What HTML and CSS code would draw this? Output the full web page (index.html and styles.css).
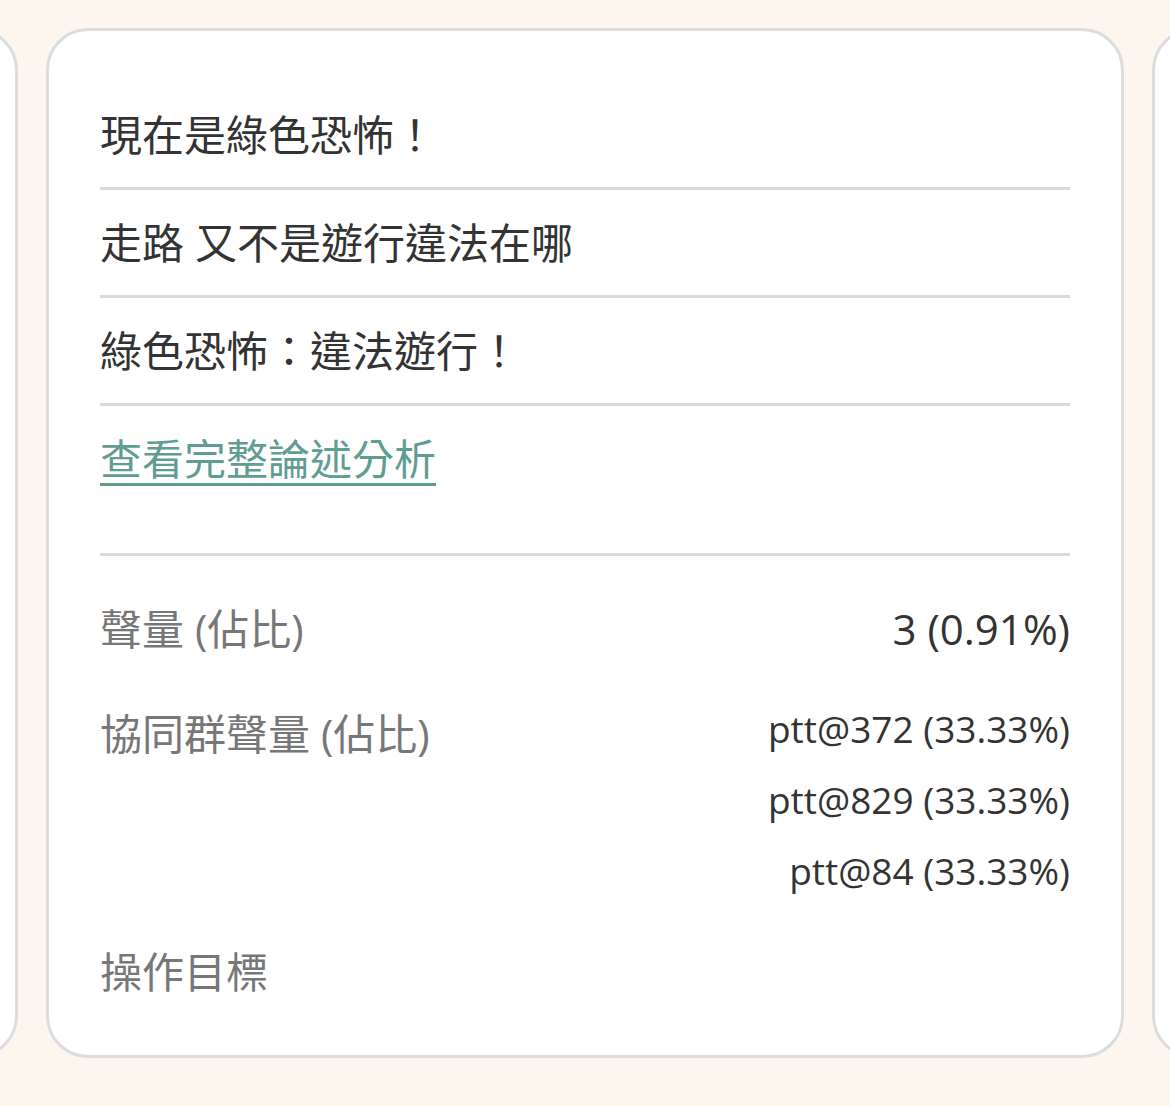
FILE: index.html
```html
<!DOCTYPE html>
<html lang="zh-Hant">
<head>
<meta charset="utf-8">
<title>論述卡片</title>
<link rel="stylesheet" href="styles.css">
</head>
<body>
<div class="track">
  <section class="card card-side" aria-hidden="true"></section>
  <section class="card">
    <ul class="claims">
      <li class="claim">現在是綠色恐怖！</li>
      <li class="claim">走路 又不是遊行違法在哪</li>
      <li class="claim">綠色恐怖：違法遊行！</li>
    </ul>
    <a class="more" href="#">查看完整論述分析</a>
    <dl class="stats">
      <div class="stat">
        <dt class="label">聲量 (佔比)</dt>
        <dd class="value">3 (0.91%)</dd>
      </div>
      <div class="stat">
        <dt class="label">協同群聲量 (佔比)</dt>
        <dd class="value">
          <span class="group">ptt@372 (33.33%)</span>
          <span class="group">ptt@829 (33.33%)</span>
          <span class="group">ptt@84 (33.33%)</span>
        </dd>
      </div>
      <div class="stat">
        <dt class="label">操作目標</dt>
        <dd class="value"></dd>
      </div>
    </dl>
  </section>
  <section class="card card-side" aria-hidden="true"></section>
</div>
</body>
</html>
```

FILE: styles.css
```css
html, body {
  margin: 0;
  padding: 0;
}
body {
  background: #fdf6ef;
  font-family: "Open Sans", "Noto Sans CJK TC", sans-serif;
  color: #333333;
  overflow: hidden;
}
.track {
  display: flex;
  justify-content: center;
  gap: 28px;
  padding-top: 28px;
  overflow: hidden;
}
.card {
  flex: 0 0 1078px;
  box-sizing: border-box;
  height: 1030px;
  background: #ffffff;
  border: 3px solid #dcdcdc;
  border-radius: 42px;
  padding: 51px 51px 0;
}
.claims {
  list-style: none;
  margin: 0;
  padding: 0;
}
.claim {
  font-size: 42px;
  line-height: 63px;
  padding: 21px 0;
  border-bottom: 3px solid #dadada;
  color: #333333;
}
.more {
  display: block;
  font-size: 42px;
  line-height: 63px;
  padding: 21px 0;
  color: #5f9c91;
  text-decoration: underline;
  text-decoration-thickness: 3px;
  text-underline-offset: 8px;
  width: max-content;
}
.stats {
  margin: 42px 0 0;
  padding-top: 41px;
  border-top: 3px solid #dadada;
  display: flex;
  flex-direction: column;
  gap: 42px;
}
.stat {
  display: flex;
  justify-content: space-between;
  align-items: flex-start;
}
.label {
  font-size: 42px;
  line-height: 63px;
  color: #777777;
}
.value {
  margin: 0;
  font-size: 42px;
  line-height: 63px;
  color: #333333;
  display: flex;
  flex-direction: column;
  align-items: flex-end;
  gap: 17px;
}
.group {
  font-size: 37px;
  line-height: 54px;
}
```
